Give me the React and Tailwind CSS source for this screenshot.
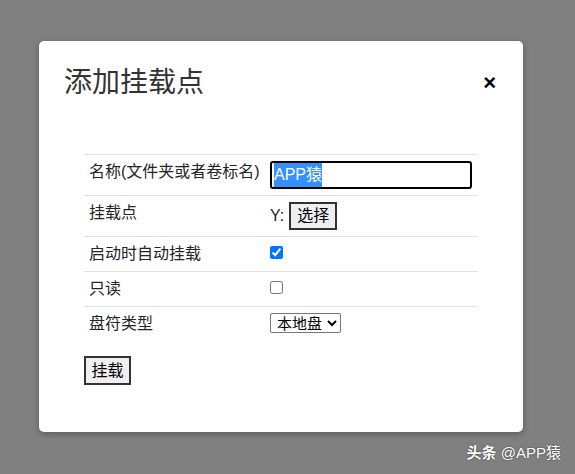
import React from 'react';

const font = { fontFamily: '"Liberation Sans", "Noto Sans CJK SC", sans-serif' };

// one row of the form table
const Row = ({ label, h, children }) => (
  <div className={`flex border-t border-[#dee2e6] ${h}`}>
    <div className="w-[186px] pl-[5px] pt-[5px] text-[16px] leading-[24px] text-[#212529]">{label}</div>
    <div className="flex-1">{children}</div>
  </div>
);

export default function App() {
  return (
    <div className="relative w-[575px] h-[474px] bg-[#808080] pt-[41px] pl-[39px] overflow-hidden" style={font}>
      {/* Modal */}
      <div className="w-[484px] h-[391px] bg-white rounded-[5px] shadow-[0_2px_6px_rgba(0,0,0,0.3)]">
        <div className="flex items-start justify-between pl-[25px] pr-[27px] pt-[25px]">
          <h1 className="text-[28px] leading-[34px] text-[#333]">添加挂载点</h1>
          <button className="mt-[5px] text-[22px] leading-[24px] font-bold text-black">×</button>
        </div>

        <div className="ml-[45px] mt-[54px] w-[394px]">
          <Row label="名称(文件夹或者卷标名)" h="h-[41px]">
            <div className="mt-[6px] w-[202px] h-[28px] border-2 border-black rounded-[3px] pl-[2px] flex items-center">
              <span className="bg-[#3390ff] text-white text-[16px] leading-[24px]">APP猿</span>
            </div>
          </Row>
          <Row label="挂载点" h="h-[41px]">
            <div className="flex items-start pt-[6px] text-[16px] text-[#212529]">
              <span className="leading-[28px] mr-[5px]">Y:</span>
              <button className="h-[28px] px-[6px] bg-[#efefef] border-2 border-[#333] text-black text-[16px] leading-[22px]">选择</button>
            </div>
          </Row>
          <Row label="启动时自动挂载" h="h-[35px]">
            <input type="checkbox" defaultChecked className="mt-[9px] w-[13px] h-[13px] block" />
          </Row>
          <Row label="只读" h="h-[35px]">
            <input type="checkbox" className="mt-[9px] w-[13px] h-[13px] block" />
          </Row>
          <Row label="盘符类型" h="h-[35px]">
            <select className="mt-[6px] h-[20px] w-[71px] border border-[#767676] rounded-[2px] text-[15px] leading-[18px] text-black pl-[2px]">
              <option>本地盘</option>
            </select>
          </Row>
        </div>

        <button className="ml-[45px] mt-[15px] h-[29px] w-[47px] bg-[#efefef] border-2 border-[#333] text-black text-[16px] leading-[22px]">挂载</button>
      </div>

      {/* watermark */}
      <div className="absolute right-[14px] bottom-[12px] text-white text-[15px] leading-[18px] [text-shadow:0_0_2px_rgba(0,0,0,0.6)]">
        <span className="font-bold">头条</span> @APP猿
      </div>
    </div>
  );
}
